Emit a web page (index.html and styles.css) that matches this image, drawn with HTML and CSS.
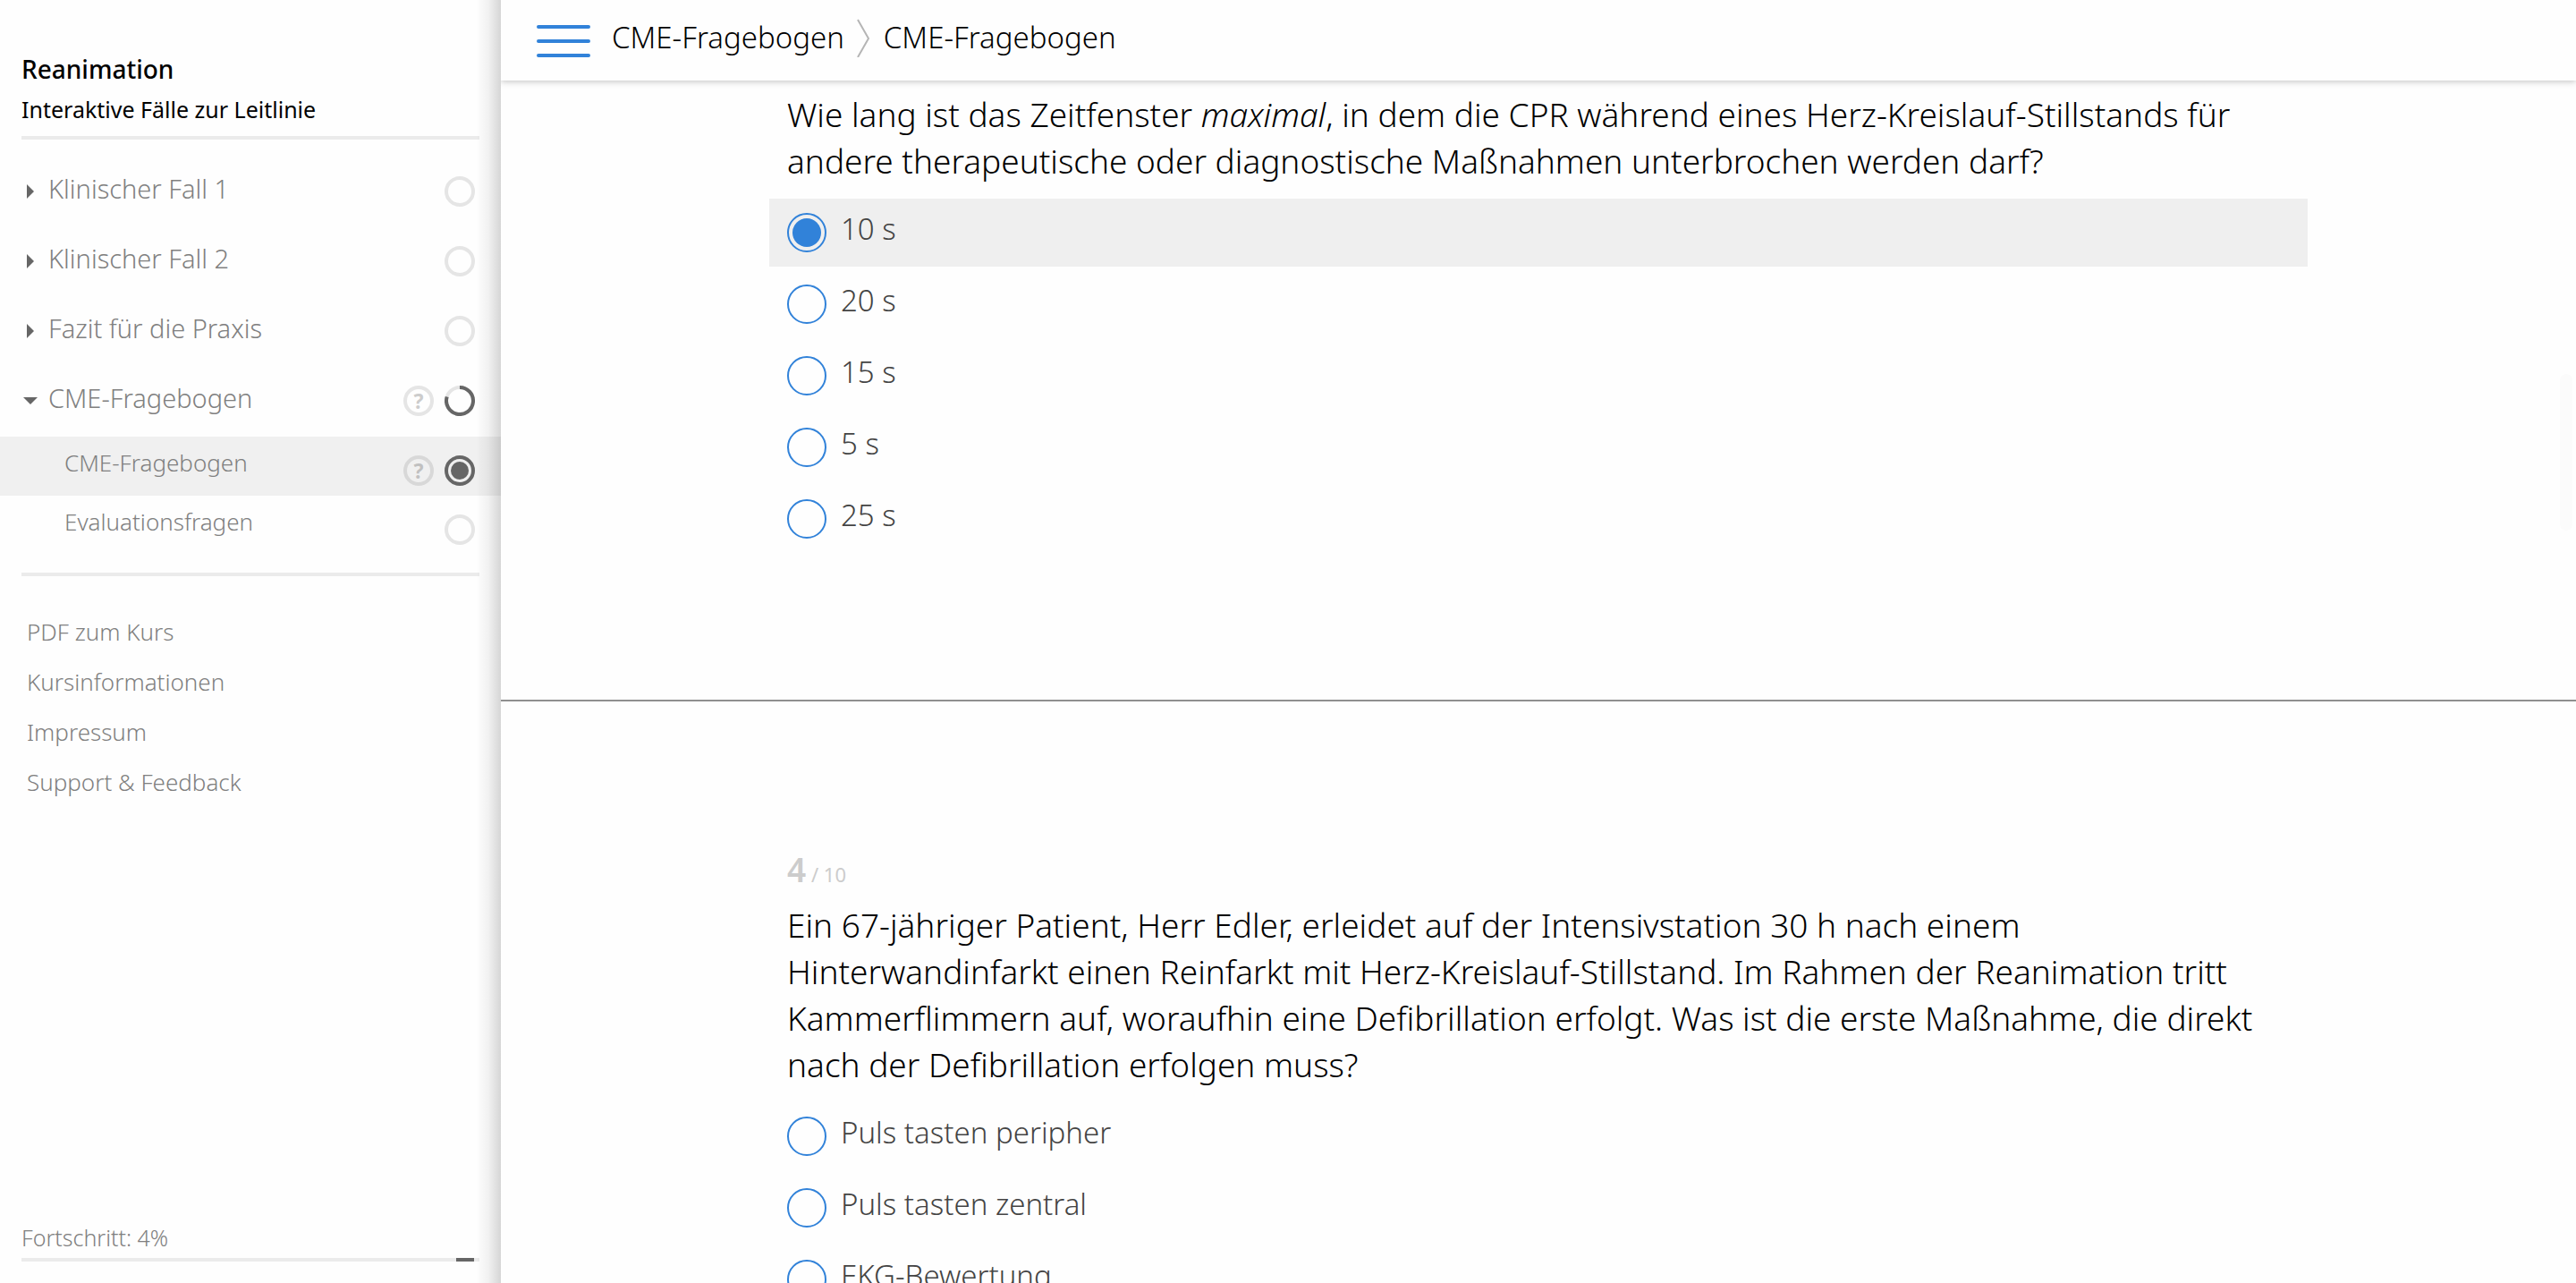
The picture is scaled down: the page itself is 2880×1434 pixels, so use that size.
FILE: index.html
```html
<!DOCTYPE html>
<html lang="de">
<head>
<meta charset="utf-8">
<meta name="viewport" content="width=device-width, initial-scale=1">
<title>Reanimation – CME-Fragebogen</title>
<link rel="stylesheet" href="styles.css">
</head>
<body>
<div class="app">
  <aside class="sidebar">
    <header class="course">
      <h1 class="course-title">Reanimation</h1>
      <p class="course-subtitle">Interaktive Fälle zur Leitlinie</p>
    </header>
    <nav class="chapters" aria-label="Kapitel">
      <button class="chapter" type="button" aria-expanded="false">
        <svg class="arrow" viewBox="0 0 16 16" aria-hidden="true"><path d="M4 0l8 8-8 8z"/></svg>
        <span class="nav-text">Klinischer Fall 1</span>
        <svg class="status" viewBox="0 0 34 34" aria-hidden="true"><circle class="ring" cx="17" cy="17" r="15"/></svg>
      </button>
      <button class="chapter" type="button" aria-expanded="false">
        <svg class="arrow" viewBox="0 0 16 16" aria-hidden="true"><path d="M4 0l8 8-8 8z"/></svg>
        <span class="nav-text">Klinischer Fall 2</span>
        <svg class="status" viewBox="0 0 34 34" aria-hidden="true"><circle class="ring" cx="17" cy="17" r="15"/></svg>
      </button>
      <button class="chapter" type="button" aria-expanded="false">
        <svg class="arrow" viewBox="0 0 16 16" aria-hidden="true"><path d="M4 0l8 8-8 8z"/></svg>
        <span class="nav-text">Fazit für die Praxis</span>
        <svg class="status" viewBox="0 0 34 34" aria-hidden="true"><circle class="ring" cx="17" cy="17" r="15"/></svg>
      </button>
      <button class="chapter" type="button" aria-expanded="true">
        <svg class="arrow" viewBox="0 0 16 16" aria-hidden="true"><path d="M0 4h16l-8 8z"/></svg>
        <span class="nav-text">CME-Fragebogen</span>
        <span class="help">?</span>
        <svg class="status" viewBox="0 0 34 34" aria-hidden="true"><circle class="ring" cx="17" cy="17" r="15"/><path class="ring-done" d="M17 2A15 15 0 1 1 2.700 12.500"/></svg>
      </button>
      <a class="section is-active" href="#cme" aria-current="page">
        <span class="nav-text">CME-Fragebogen</span>
        <span class="marks">
          <span class="help">?</span>
          <svg class="status" viewBox="0 0 34 34" aria-hidden="true"><circle class="ring-done" cx="17" cy="17" r="15"/><circle class="dot" cx="17" cy="17" r="10"/></svg>
        </span>
      </a>
      <a class="section" href="#evaluation">
        <span class="nav-text">Evaluationsfragen</span>
        <span class="marks">
          <svg class="status" viewBox="0 0 34 34" aria-hidden="true"><circle class="ring" cx="17" cy="17" r="15"/></svg>
        </span>
      </a>
    </nav>
    <nav class="links" aria-label="Informationen">
      <a href="#pdf">PDF zum Kurs</a>
      <a href="#kurs">Kursinformationen</a>
      <a href="#impressum">Impressum</a>
      <a href="#support">Support &amp; Feedback</a>
    </nav>
    <div class="progress">
      <span id="progress-label">Fortschritt: 4%</span>
      <div class="track" role="progressbar" aria-labelledby="progress-label" aria-valuenow="4"><div class="fill" style="width:4%"></div></div>
    </div>
  </aside>

  <div class="content">
    <header class="topbar">
      <button class="menu" type="button" aria-label="Menü">
        <svg viewBox="0 0 60 36" aria-hidden="true"><path d="M2 2h56M2 18h56M2 34h56"/></svg>
      </button>
      <nav class="crumbs" aria-label="Pfad">
        <a href="#fragebogen">CME-Fragebogen</a>
        <svg class="chevron" viewBox="0 0 14 46" aria-hidden="true"><path d="M1 4l12 21L1 46"/></svg>
        <a href="#cme">CME-Fragebogen</a>
      </nav>
    </header>

    <main class="questions" id="cme">
      <fieldset class="question">
        <legend class="prompt">Wie lang ist das Zeitfenster <em>maximal</em>, in dem die CPR während eines Herz-Kreislauf-Stillstands für andere therapeutische oder diagnostische Maßnahmen unterbrochen werden darf?</legend>
        <div class="options">
          <label class="option"><input type="radio" name="q3" checked><span>10 s</span></label>
          <label class="option"><input type="radio" name="q3"><span>20 s</span></label>
          <label class="option"><input type="radio" name="q3"><span>15 s</span></label>
          <label class="option"><input type="radio" name="q3"><span>5 s</span></label>
          <label class="option"><input type="radio" name="q3"><span>25 s</span></label>
        </div>
      </fieldset>
      <hr class="divider">
      <p class="counter"><strong>4</strong> / 10</p>
      <fieldset class="question">
        <legend class="prompt">Ein 67-jähriger Patient, Herr Edler, erleidet auf der Intensivstation 30 h nach einem Hinterwandinfarkt einen Reinfarkt mit Herz-Kreislauf-Stillstand. Im Rahmen der Reanimation tritt Kammerflimmern auf, woraufhin eine Defibrillation erfolgt. Was ist die erste Maßnahme, die direkt nach der Defibrillation erfolgen muss?</legend>
        <div class="options">
          <label class="option"><input type="radio" name="q4"><span>Puls tasten peripher</span></label>
          <label class="option"><input type="radio" name="q4"><span>Puls tasten zentral</span></label>
          <label class="option"><input type="radio" name="q4"><span>EKG-Bewertung</span></label>
        </div>
      </fieldset>
    </main>
    <div class="scroll-thumb"></div>
  </div>
</div>
</body>
</html>
```
FILE: styles.css
```css
:root {
  --blue: #3182d9;
  --line: #ebebeb;
  --ring: #e5e5e5;
  --dark: #666;
  --muted: #808080;
}

* { box-sizing: border-box; }

body {
  margin: 0;
  background: #fefefe;
  color: #000;
  font-family: "Noto Sans", sans-serif;
  font-weight: 300;
}

h1, p { margin: 0; }
a { color: inherit; text-decoration: none; }

button {
  border: 0;
  padding: 0;
  background: none;
  color: inherit;
  font: inherit;
  cursor: pointer;
}

.app {
  display: grid;
  grid-template-columns: 560px minmax(0, 1fr);
  height: 100vh;
  overflow: hidden;
}

/* Sidebar */
.sidebar {
  position: relative;
  display: flex;
  flex-direction: column;
  padding: 57px 0 24px;
  color: var(--muted);
}

.sidebar::after {
  content: "";
  position: absolute;
  inset: 0 0 0 auto;
  width: 28px;
  background: linear-gradient(to right, rgba(0, 0, 0, 0), rgba(0, 0, 0, .05) 50%, rgba(0, 0, 0, .16));
  pointer-events: none;
}

.course {
  margin: 0 24px;
  padding-bottom: 10px;
  border-bottom: 4px solid var(--line);
  color: #000;
}

.course-title {
  margin-bottom: 5px;
  font-size: 28px;
  font-weight: 500;
  line-height: 40px;
}

.course-subtitle {
  font-size: 25px;
  font-weight: 400;
  line-height: 40px;
}

.chapters {
  display: flex;
  flex-direction: column;
  padding-top: 20px;
}

.chapter {
  display: flex;
  align-items: center;
  height: 78px;
  padding: 0 29px 2px 26px;
  font-size: 29px;
  text-align: left;
}

.arrow {
  width: 16px;
  height: 16px;
  margin-right: 12px;
  fill: var(--dark);
}

.nav-text {
  flex: 1;
  margin-bottom: 8px;
}

.status {
  display: block;
  width: 34px;
  height: 34px;
  fill: none;
  stroke-width: 4;
}

.ring { stroke: var(--ring); }
.ring-done { stroke: var(--dark); }
.dot { fill: var(--dark); }

.help {
  width: 34px;
  height: 34px;
  margin-right: 12px;
  border: 4px solid var(--ring);
  border-radius: 50%;
  color: #ccc;
  font-size: 23px;
  font-weight: 700;
  line-height: 26px;
  text-align: center;
}

.section {
  display: flex;
  align-items: center;
  height: 66px;
  padding: 0 29px 0 72px;
  font-size: 26px;
}

.marks {
  display: flex;
  padding-top: 10px;
}

.is-active { background: #f0f0f0; }
.is-active .help { border-color: #d8d8d8; color: #c0c0c0; }

.links {
  display: flex;
  flex-direction: column;
  margin: 20px 24px 0;
  padding: 34px 6px 0;
  border-top: 4px solid var(--line);
  font-size: 26px;
  line-height: 56px;
}

.progress {
  margin: auto 24px 0;
  font-size: 25px;
  line-height: 40px;
}

.track {
  display: flex;
  justify-content: flex-end;
  height: 4px;
  margin-top: 3px;
  padding-right: 6px;
  background: var(--line);
}

.fill { background: var(--dark); }

/* Content */
.content {
  position: relative;
  display: flex;
  flex-direction: column;
  min-height: 0;
  overflow: hidden;
}

.topbar {
  z-index: 1;
  display: flex;
  flex: none;
  align-items: center;
  height: 90px;
  padding: 2px 40px 0;
  box-shadow: 0 1px 7px rgba(0, 0, 0, .25);
  background: #fefefe;
}

.menu { margin-right: 24px; }

.menu svg {
  display: block;
  width: 60px;
  height: 36px;
  fill: none;
  stroke: var(--blue);
  stroke-width: 4;
  stroke-linecap: round;
}

.crumbs {
  display: flex;
  align-items: center;
  padding-bottom: 10px;
  font-size: 33px;
}

.chevron {
  width: 14px;
  height: 46px;
  margin: 0 16px 0 14px;
  fill: none;
  stroke: #b5b5b5;
  stroke-width: 2;
}

.questions {
  flex: 1;
  min-height: 0;
  padding-top: 12px;
  overflow-y: auto;
  scrollbar-width: none;
}

.question {
  width: 75%;
  max-width: 1720px;
  min-width: 0;
  margin: 0 auto;
  padding: 0;
  border: 0;
}

.prompt {
  padding: 0 20px;
  font-size: 37px;
  line-height: 52px;
}

.options {
  display: flex;
  flex-direction: column;
  gap: 4px;
  padding-top: 16px;
}

.option {
  display: flex;
  align-items: flex-start;
  gap: 16px;
  height: 76px;
  padding: 0 20px;
  color: #444;
  font-size: 33px;
  line-height: 52px;
}

.option span { padding-top: 8px; }
.option:has(:checked) { background: #efefef; }

.option input {
  appearance: none;
  flex: none;
  width: 44px;
  height: 44px;
  margin: 16px 0 0;
  border: 2px solid var(--blue);
  border-radius: 50%;
}

.option input:checked {
  padding: 4px;
  background: var(--blue) content-box;
}

.divider {
  height: 2px;
  margin: 164px 0 162px;
  border: 0;
  background: #8f8f8f;
}

.counter {
  width: 75%;
  max-width: 1720px;
  margin: 0 auto 5px;
  padding: 0 20px;
  color: #ccc;
  font-size: 22px;
  font-weight: 400;
  line-height: 52px;
}

.counter strong {
  font-size: 37px;
  font-weight: 600;
}

.scroll-thumb {
  position: absolute;
  top: 418px;
  right: 4px;
  width: 14px;
  height: 175px;
  border-radius: 7px;
  background: #fbfbfb;
}
```
